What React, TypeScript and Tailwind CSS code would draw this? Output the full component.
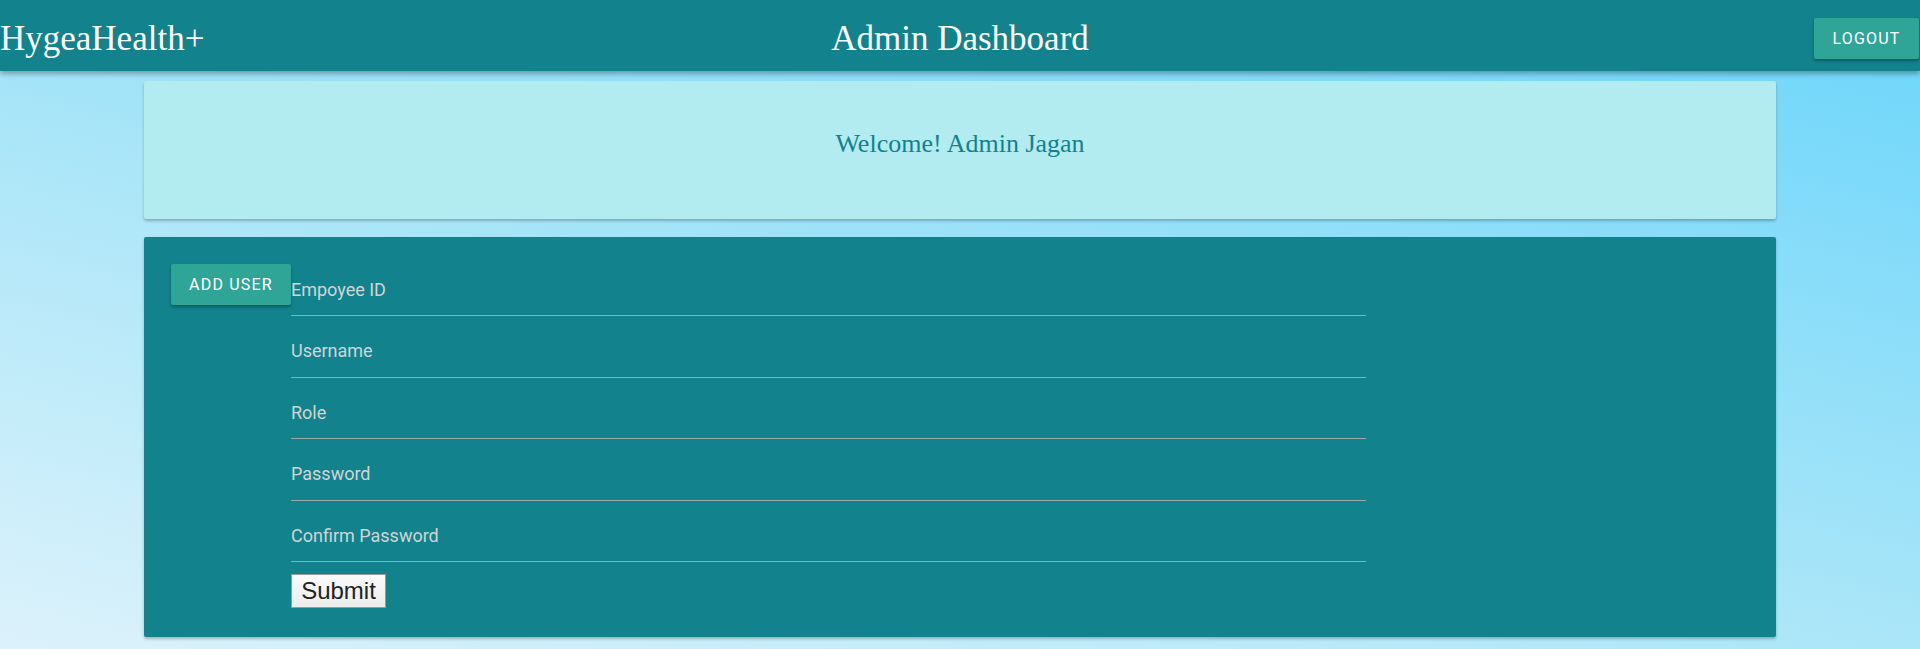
export default function App() {
  const fields = ['Empoyee ID', 'Username', 'Role', 'Password', 'Confirm Password'];

  return (
    <div className="min-h-[649px] w-full bg-[linear-gradient(15deg,#dcf2fb_0%,#a4e4f8_50%,#6bd5fb_100%)]">
      {/* Header */}
      <header className="relative z-10 flex h-[71px] items-center justify-between bg-[#12828c] pt-[6px] shadow-[0_3px_5px_rgba(0,0,0,0.3)]">
        <div className="w-[300px] font-['Liberation_Serif',serif] text-[35px] leading-none text-white">
          HygeaHealth+
        </div>
        <h1 className="font-['Liberation_Serif',serif] text-[35px] leading-none text-white">
          Admin Dashboard
        </h1>
        <div className="flex w-[300px] justify-end">
          <button className="mr-[1px] h-[41px] w-[105px] rounded-[2px] bg-[#2fa597] font-['Roboto',sans-serif] text-[16px] tracking-[1.2px] text-white shadow-[0_2px_3px_rgba(0,0,0,0.3)]">
            LOGOUT
          </button>
        </div>
      </header>

      <main className="mx-[144px] pt-[10px] pb-[12px]">
        {/* Welcome card */}
        <div className="flex h-[138px] items-center justify-center rounded-[2px] bg-[#b2ebf0] pb-[14px] shadow-[0_2px_3px_rgba(0,0,0,0.25)]">
          <p className="font-['Liberation_Serif',serif] text-[26px] text-[#12828c]">Welcome! Admin Jagan</p>
        </div>

        {/* Add user card */}
        <div className="mt-[18px] flex h-[400px] items-start rounded-[2px] bg-[#12828c] px-[27px] pt-[27px] shadow-[0_2px_3px_rgba(0,0,0,0.25)]">
          <button className="h-[41px] w-[120px] shrink-0 rounded-[2px] bg-[#2fa597] font-['Roboto',sans-serif] text-[16px] tracking-[1.2px] text-white shadow-[0_2px_3px_rgba(0,0,0,0.3)]">
            ADD USER
          </button>
          <form className="flex w-[1075px] flex-col pt-[4px]" onSubmit={(e) => e.preventDefault()}>
            {fields.map((f, i) => (
              <input
                key={f}
                type={f.includes('Password') ? 'password' : 'text'}
                placeholder={f}
                className={`h-[48px] border-b border-[#9aa9aa] bg-transparent pb-[5px] font-['Roboto',sans-serif] text-[18px] text-white outline-none placeholder:text-[#cdd6d6] ${i > 0 ? 'mt-[13.5px]' : ''}`}
              />
            ))}
            <div className="mt-[12px]">
              <button
                type="submit"
                className="h-[34px] w-[95px] border border-[#9a9a9a] bg-gradient-to-b from-[#fbfbfb] to-[#ececec] font-['Liberation_Sans',sans-serif] text-[24px] leading-none text-[#222]"
              >
                Submit
              </button>
            </div>
          </form>
        </div>
      </main>
    </div>
  );
}
